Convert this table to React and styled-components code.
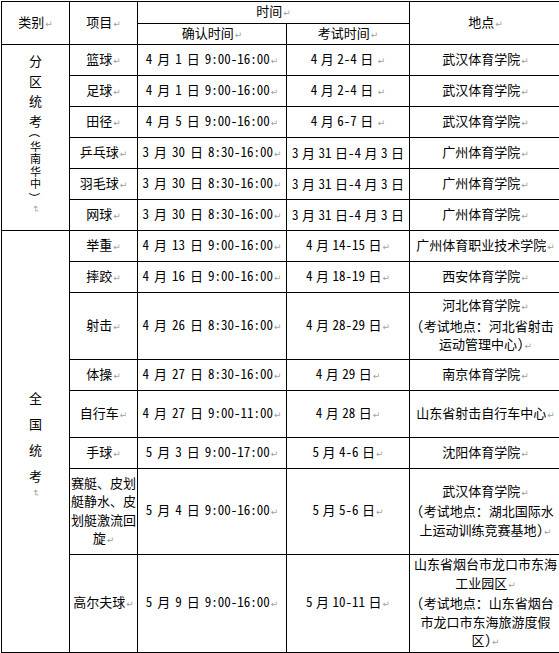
import React from "react";
import styled, { createGlobalStyle } from "styled-components";

const GlobalStyle = createGlobalStyle`
  html, body {
    margin: 0;
    padding: 0;
    background: #fff;
    overflow: hidden;
  }
  body {
    font-family: "Noto Sans CJK SC", "Noto Sans", sans-serif;
    color: #000;
  }
`;

// the whole schedule is one bordered table
const Sheet = styled.table`
  border-collapse: collapse;
  table-layout: fixed;
  width: 560px;
  margin: 1px 0 0 1px;
  font-size: 13px;
  line-height: 18.5px;
  font-feature-settings: "hwid" 1;
`;

const Row = styled.tr`
  height: ${({ $h }) => $h}px;
`;

const Cell = styled.td`
  border: 1px solid #000;
  padding: ${({ $tight }) => ($tight ? "0 1px" : "0 2px")};
  text-align: center;
  vertical-align: middle;
  white-space: ${({ $nowrap }) => ($nowrap ? "nowrap" : "normal")};
  word-spacing: ${({ $spacing }) => $spacing || 0}px;
  overflow: hidden;
`;

const Para = styled.span`
  display: block;
`;

// Word's paragraph mark, light grey
const Mark = styled.span`
  font-family: "DejaVu Sans", sans-serif;
  font-size: 9px;
  color: #a0a0a0;
  margin-left: 1px;
  word-spacing: 0;
`;

// vertical group labels in the first column
const Stack = styled.div`
  display: flex;
  flex-direction: column;
  align-items: center;
  padding-bottom: ${({ $shift }) => $shift || 0}px;
`;

const StackChar = styled.span`
  display: block;
  font-size: ${({ $size }) => $size}px;
  line-height: ${({ $pitch }) => $pitch}px;
  height: ${({ $pitch }) => $pitch}px;
  transform: ${({ $turn }) => ($turn ? "rotate(90deg)" : "none")};
`;

const TurnedMark = styled(Mark)`
  display: block;
  margin: 0;
  line-height: ${({ $pitch }) => $pitch}px;
  transform: rotate(90deg);
`;

const WithMark = ({ children, gap }) => (
  <>
    {children}
    {gap ? " " : null}
    <Mark>↵</Mark>
  </>
);

const rows = [
  { h: 31, name: "篮球", confirm: "4 月 1 日 9:00-16:00", exam: "4 月 2-4 日", examGap: true, place: ["武汉体育学院"] },
  { h: 31, name: "足球", confirm: "4 月 1 日 9:00-16:00", exam: "4 月 2-4 日", examGap: true, place: ["武汉体育学院"] },
  { h: 31, name: "田径", confirm: "4 月 5 日 9:00-16:00", exam: "4 月 6-7 日", examGap: true, place: ["武汉体育学院"] },
  { h: 31, name: "乒乓球", confirm: "3 月 30 日 8:30-16:00", exam: "3 月 31 日-4 月 3 日", noMark: true, place: ["广州体育学院"] },
  { h: 31, name: "羽毛球", confirm: "3 月 30 日 8:30-16:00", exam: "3 月 31 日-4 月 3 日", noMark: true, place: ["广州体育学院"] },
  { h: 31, name: "网球", confirm: "3 月 30 日 8:30-16:00", exam: "3 月 31 日-4 月 3 日", noMark: true, place: ["广州体育学院"] },
  { h: 31, name: "举重", confirm: "4 月 13 日 9:00-16:00", exam: "4 月 14-15 日", place: ["广州体育职业技术学院"] },
  { h: 31, name: "摔跤", confirm: "4 月 16 日 9:00-16:00", exam: "4 月 18-19 日", place: ["西安体育学院"] },
  { h: 67, name: "射击", confirm: "4 月 26 日 8:30-16:00", exam: "4 月 28-29 日", place: ["河北体育学院", "（考试地点：河北省射击运动管理中心）"] },
  { h: 31, name: "体操", confirm: "4 月 27 日 8:30-16:00", exam: "4 月 29 日", place: ["南京体育学院"] },
  { h: 47, name: "自行车", confirm: "4 月 27 日 9:00-11:00", exam: "4 月 28 日", place: ["山东省射击自行车中心"] },
  { h: 31, name: "手球", confirm: "5 月 3 日 9:00-17:00", exam: "5 月 4-6 日", place: ["沈阳体育学院"] },
  { h: 86, name: "赛艇、皮划艇静水、皮划艇激流回旋", confirm: "5 月 4 日 9:00-16:00", exam: "5 月 5-6 日", place: ["武汉体育学院", "（考试地点：湖北国际水上运动训练竞赛基地）"] },
  { h: 97, name: "高尔夫球", confirm: "5 月 9 日 9:00-16:00", exam: "5 月 10-11 日", place: ["山东省烟台市龙口市东海工业园区", "（考试地点：山东省烟台市龙口市东海旅游度假区）"] },
];

const RegionLabel = () => (
  <Stack $shift={6}>
    {["分", "区", "统", "考"].map((c) => (
      <StackChar key={c} $size={13} $pitch={20}>{c}</StackChar>
    ))}
    <StackChar $size={11} $pitch={9} $turn>(</StackChar>
    {["华", "南", "华", "中"].map((c, i) => (
      <StackChar key={i} $size={11} $pitch={12.5}>{c}</StackChar>
    ))}
    <StackChar $size={11} $pitch={9} $turn>)</StackChar>
    <TurnedMark $pitch={20}>↵</TurnedMark>
  </Stack>
);

const NationalLabel = () => (
  <Stack>
    {["全", "国", "统", "考"].map((c) => (
      <StackChar key={c} $size={13} $pitch={26}>{c}</StackChar>
    ))}
    <TurnedMark $pitch={8}>↵</TurnedMark>
  </Stack>
);

export default function App() {
  return (
    <>
      <GlobalStyle />
      <Sheet>
        <colgroup>
          <col style={{ width: 68 }} />
          <col style={{ width: 68 }} />
          <col style={{ width: 149 }} />
          <col style={{ width: 123 }} />
          <col style={{ width: 152 }} />
        </colgroup>
        <tbody>
          <Row $h={21}>
            <Cell rowSpan={2}><WithMark>类别</WithMark></Cell>
            <Cell rowSpan={2}><WithMark>项目</WithMark></Cell>
            <Cell colSpan={2}><WithMark>时间</WithMark></Cell>
            <Cell rowSpan={2}><WithMark>地点</WithMark></Cell>
          </Row>
          <Row $h={21}>
            <Cell><WithMark>确认时间</WithMark></Cell>
            <Cell><WithMark>考试时间</WithMark></Cell>
          </Row>
          {rows.map((r, i) => (
            <Row key={i} $h={r.h}>
              {i === 0 && (
                <Cell rowSpan={6}><RegionLabel /></Cell>
              )}
              {i === 6 && (
                <Cell rowSpan={8}><NationalLabel /></Cell>
              )}
              <Cell $tight><WithMark>{r.name}</WithMark></Cell>
              <Cell $tight $nowrap $spacing={-1.5}><WithMark>{r.confirm}</WithMark></Cell>
              <Cell $tight $nowrap $spacing={-3}>
                {r.noMark ? r.exam : <WithMark gap={r.examGap}>{r.exam}</WithMark>}
              </Cell>
              <Cell>
                {r.place.map((p, j) => (
                  <Para key={j}><WithMark>{p}</WithMark></Para>
                ))}
              </Cell>
            </Row>
          ))}
        </tbody>
      </Sheet>
    </>
  );
}
